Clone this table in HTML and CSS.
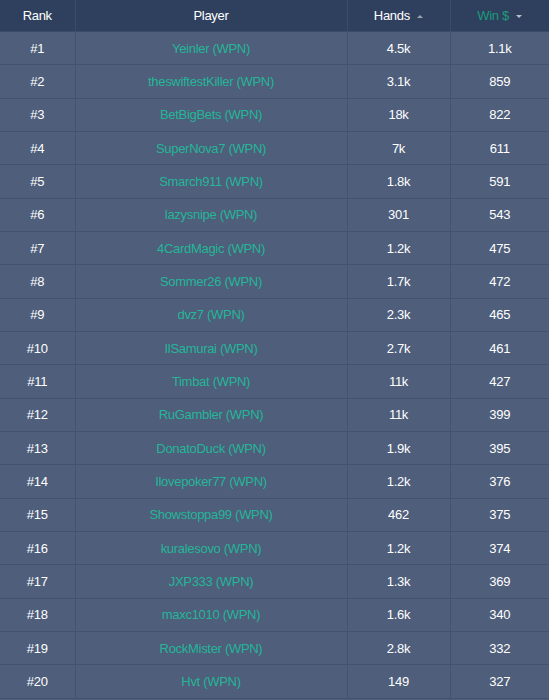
FILE: index.html
```html
<!DOCTYPE html>
<html>
<head>
<meta charset="utf-8">
<link rel="stylesheet" href="styles.css">
</head>
<body>
<table class="board">
  <colgroup>
    <col class="c-rank"><col class="c-player"><col class="c-hands"><col class="c-win">
  </colgroup>
  <thead>
    <tr>
      <th>Rank</th>
      <th>Player</th>
      <th>Hands <span class="caret up"></span></th>
      <th class="active">Win $ <span class="caret down"></span></th>
    </tr>
  </thead>
  <tbody>
    <tr><td>#1</td><td class="player">Yeinler (WPN)</td><td>4.5k</td><td>1.1k</td></tr>
    <tr><td>#2</td><td class="player">theswiftestKiller (WPN)</td><td>3.1k</td><td>859</td></tr>
    <tr><td>#3</td><td class="player">BetBigBets (WPN)</td><td>18k</td><td>822</td></tr>
    <tr><td>#4</td><td class="player">SuperNova7 (WPN)</td><td>7k</td><td>611</td></tr>
    <tr><td>#5</td><td class="player">Smarch911 (WPN)</td><td>1.8k</td><td>591</td></tr>
    <tr><td>#6</td><td class="player">lazysnipe (WPN)</td><td>301</td><td>543</td></tr>
    <tr><td>#7</td><td class="player">4CardMagic (WPN)</td><td>1.2k</td><td>475</td></tr>
    <tr><td>#8</td><td class="player">Sommer26 (WPN)</td><td>1.7k</td><td>472</td></tr>
    <tr><td>#9</td><td class="player">dvz7 (WPN)</td><td>2.3k</td><td>465</td></tr>
    <tr><td>#10</td><td class="player">IlSamurai (WPN)</td><td>2.7k</td><td>461</td></tr>
    <tr><td>#11</td><td class="player">Timbat (WPN)</td><td>11k</td><td>427</td></tr>
    <tr><td>#12</td><td class="player">RuGambler (WPN)</td><td>11k</td><td>399</td></tr>
    <tr><td>#13</td><td class="player">DonatoDuck (WPN)</td><td>1.9k</td><td>395</td></tr>
    <tr><td>#14</td><td class="player">Ilovepoker77 (WPN)</td><td>1.2k</td><td>376</td></tr>
    <tr><td>#15</td><td class="player">Showstoppa99 (WPN)</td><td>462</td><td>375</td></tr>
    <tr><td>#16</td><td class="player">kuralesovo (WPN)</td><td>1.2k</td><td>374</td></tr>
    <tr><td>#17</td><td class="player">JXP333 (WPN)</td><td>1.3k</td><td>369</td></tr>
    <tr><td>#18</td><td class="player">maxc1010 (WPN)</td><td>1.6k</td><td>340</td></tr>
    <tr><td>#19</td><td class="player">RockMister (WPN)</td><td>2.8k</td><td>332</td></tr>
    <tr><td>#20</td><td class="player">Hvt (WPN)</td><td>149</td><td>327</td></tr>
  </tbody>
</table>
</body>
</html>
```
FILE: styles.css
```css
html, body {
  margin: 0;
  padding: 0;
  background: #4e5e7b;
}
.board {
  width: 549px;
  border-collapse: collapse;
  table-layout: fixed;
  font-family: "Liberation Sans", Arial, sans-serif;
  font-size: 13px;
  letter-spacing: -0.3px;
  color: #ffffff;
}
.c-rank { width: 75px; }
.c-player { width: 272px; }
.c-hands { width: 103px; }
.c-win { width: 99px; }
.board th,
.board td {
  text-align: center;
  padding: 0 4px;
  border-left: 1px solid #43536e;
  border-bottom: 1px solid #43536e;
}
.board th:first-child,
.board td:first-child {
  border-left: none;
}
.board thead th {
  background: #2f405e;
  height: 31px;
  font-weight: normal;
  border-left-color: #3b4c69;
  border-bottom-color: #3b4c69;
}
.board th.active {
  color: #1a9b7a;
}
.board tbody td {
  background: #4e5e7b;
  height: 32.33px;
}
.board td.player {
  color: #25b697;
}
.caret {
  display: inline-block;
  width: 0;
  height: 0;
  margin-left: 4px;
  vertical-align: middle;
  border-left: 3.5px solid transparent;
  border-right: 3.5px solid transparent;
}
.caret.up {
  border-bottom: 3px solid #9aa4b3;
}
.caret.down {
  border-top: 3px solid #b7bfcb;
}
```
